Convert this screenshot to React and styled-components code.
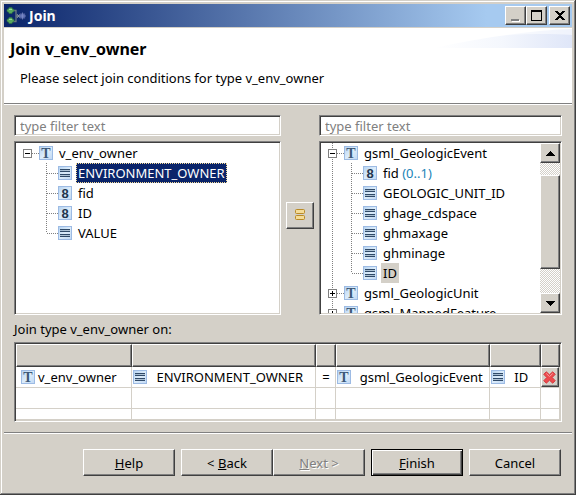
import React from "react";
import styled, { createGlobalStyle, css } from "styled-components";

const face = "#d4d0c8";
const shadow = "#808080";
const dark = "#404040";
const navy = "#0a246a";

const GlobalStyle = createGlobalStyle`
  * { box-sizing: border-box; }
  body {
    margin: 0;
    font-family: "Noto Sans", Tahoma, sans-serif;
    font-size: 13px;
    line-height: 20px;
    color: #000;
  }
  button, input, table {
    font: inherit;
    color: inherit;
  }
`;

const raised = css`
  background: ${face};
  border: 1px solid;
  border-color: #fff ${dark} ${dark} #fff;
  box-shadow: inset -1px -1px 0 ${shadow};
`;

const sunken = css`
  background: #fff;
  border: 1px solid;
  border-color: ${shadow} #fff #fff ${shadow};
  box-shadow: inset 1px 1px 0 ${dark}, inset -1px -1px 0 ${face};
`;

const dots = (direction) =>
  `repeating-linear-gradient(${direction}, ${shadow} 0 1px, transparent 1px 2px)`;

const Window = styled.main`
  display: flex;
  flex-direction: column;
  height: 100vh;
  min-height: 420px;
  padding: 4px 3px 3px 4px;
  background: ${face};
  border-right: 1px solid ${dark};
  border-bottom: 1px solid ${dark};
  box-shadow: inset 1px 1px 0 ${face}, inset -1px -1px 0 ${shadow},
    inset 2px 2px 0 #fff;
`;

const TitleBar = styled.header`
  display: flex;
  align-items: center;
  flex: none;
  height: 23px;
  padding: 0 2px;
  background: linear-gradient(90deg, ${navy}, #a6caf0 85%);
`;

const WindowTitle = styled.span`
  flex: 1;
  margin-left: 3px;
  font-size: 14px;
  font-weight: bold;
  color: #fff;
`;

const CaptionButton = styled.button`
  ${raised}
  display: grid;
  place-items: center;
  width: 21px;
  height: 19px;
  padding: 0;
  margin-left: ${(p) => (p.$apart ? 2 : 0)}px;
`;

const Banner = styled.section`
  display: grid;
  grid-template-columns: 1fr auto;
  align-items: start;
  flex: none;
  height: 76px;
  margin-top: 1px;
  background: #fff;
  border-bottom: 1px solid ${shadow};
  box-shadow: 0 1px 0 #fff;
`;

const BannerText = styled.div`
  padding: 10px 0 0 6px;
`;

const BannerTitle = styled.h1`
  margin: 0;
  font-size: 16px;
  line-height: 22px;
`;

const BannerNote = styled.p`
  margin: 8px 0 0 10px;
`;

const Content = styled.div`
  display: flex;
  flex-direction: column;
  flex: 1;
  min-height: 0;
  padding: 11px 10px 10px;
`;

const Pickers = styled.div`
  display: grid;
  grid-template-columns: 267fr 28px 243fr;
  column-gap: 5px;
  flex: 1;
  min-height: 0;
`;

const Picker = styled.section`
  display: flex;
  flex-direction: column;
  gap: 5px;
  min-width: 0;
  min-height: 0;
`;

const Filter = styled.input`
  ${sunken}
  flex: none;
  width: 100%;
  height: 21px;
  padding: 0 5px;
  border-radius: 0;
  outline: none;
  &::placeholder {
    color: ${shadow};
    opacity: 1;
  }
`;

const TreeFrame = styled.div`
  ${sunken}
  display: flex;
  flex: 1;
  min-height: 0;
  padding: 1px;
`;

const Tree = styled.ul`
  flex: 1;
  min-width: 0;
  margin: 0;
  padding: 0;
  overflow: hidden;
  list-style: none;
`;

const TreeRow = styled.li`
  display: flex;
  align-items: center;
  height: 20px;
  white-space: nowrap;
`;

const RootCell = styled.span`
  display: flex;
  align-items: center;
  flex: none;
  align-self: stretch;
  width: 23px;
  padding-left: 7px;
  background-repeat: no-repeat;
  background-image: ${(p) => (p.$line ? dots("180deg") : "none")},
    ${(p) => (p.$stub ? dots("90deg") : "none")};
  background-size: 1px 100%, 7px 1px;
  background-position: 11px 0, 16px 10px;
`;

const BranchCell = styled.span`
  flex: none;
  align-self: stretch;
  width: 19px;
  background-repeat: no-repeat;
  background-image: ${dots("180deg")}, ${dots("90deg")};
  background-size: 1px ${(p) => (p.$last ? "50%" : "100%")}, 11px 1px;
  background-position: 7px 0, 8px 10px;
`;

const Expander = styled.button`
  display: grid;
  place-items: center;
  width: 9px;
  height: 9px;
  padding: 0;
  background: #fff;
  border: 1px solid ${shadow};
`;

const NodeLabel = styled.span`
  height: 20px;
  margin-left: 4px;
  padding: 0 1px;
  line-height: 18px;
  border: 1px dotted transparent;
  ${(p) =>
    p.$state === "active" &&
    css`
      color: #fff;
      background: ${navy};
      border-color: #f5db95;
    `}
  ${(p) => p.$state === "inactive" && css`background: ${face};`}
`;

const Count = styled.span`
  color: #1a84b8;
`;

const ScrollBar = styled.div`
  display: flex;
  flex-direction: column;
  flex: none;
  width: 20px;
  background: repeating-conic-gradient(#fff 0 25%, ${face} 0 50%) 0 0 / 2px 2px;
`;

const ScrollArrow = styled.button`
  ${raised}
  display: grid;
  place-items: center;
  flex: none;
  height: 20px;
  padding: 0;
`;

const ScrollTrack = styled.div`
  display: grid;
  grid-template-rows: 12fr 95fr 24fr;
  flex: 1;
`;

const ScrollThumb = styled.div`
  ${raised}
  grid-row: 2;
`;

const LinkButton = styled.button`
  ${raised}
  display: grid;
  place-items: center;
  align-self: center;
  height: 27px;
  padding: 0;
`;

const Caption = styled.h2`
  flex: none;
  margin: 0;
  padding: 4px 0 3px;
  font-size: 13px;
  font-weight: normal;
`;

const TableFrame = styled.div`
  ${sunken}
  flex: none;
  padding: 1px;
`;

const Conditions = styled.table`
  width: 100%;
  table-layout: fixed;
  border-collapse: separate;
  border-spacing: 0;
`;

const Column = styled.col`
  width: ${(p) => p.$share}%;
`;

const HeadCell = styled.th`
  height: 23px;
  padding: 0;
  background: ${face};
  border: 1px solid;
  border-color: #fff ${dark} ${dark} #fff;
  box-shadow: inset -1px -1px 0 ${shadow};
`;

const Cell = styled.td`
  height: ${(p) => (p.$short ? 11 : 21)}px;
  padding: 0;
  border-right: 1px solid ${face};
  border-bottom: 1px solid ${face};
`;

const CellBody = styled.span`
  display: flex;
  align-items: center;
  gap: ${(p) => (p.$tight ? 3 : 9)}px;
  padding-left: ${(p) => (p.$tight ? 5 : 1)}px;
  justify-content: ${(p) => (p.$center ? "center" : "flex-start")};
  white-space: nowrap;
`;

const RemoveButton = styled.button`
  ${raised}
  display: grid;
  place-items: center;
  width: 100%;
  height: 20px;
  padding: 0;
`;

const Footer = styled.footer`
  display: flex;
  justify-content: flex-end;
  flex: none;
  gap: 6px;
  padding: 16px 11px 15px 0;
  border-top: 1px solid ${shadow};
  box-shadow: inset 0 1px 0 #fff;
`;

const Pair = styled.div`
  display: flex;
`;

const PushButton = styled.button`
  ${raised}
  width: 92px;
  height: 27px;
  padding: 0;
  ${(p) =>
    p.$primary &&
    css`
      border-color: #000;
      box-shadow: inset 1px 1px 0 #fff, inset -1px -1px 0 ${dark},
        inset -2px -2px 0 ${shadow};
    `}
  &:disabled {
    color: ${shadow};
    text-shadow: 1px 1px 0 #fff;
  }
`;

const Glyph = styled.svg`
  display: block;
  flex: none;
`;

const TileMark = styled.text`
  font-family: ${(p) => (p.$serif ? '"Liberation Serif", serif' : '"Liberation Sans", sans-serif')};
  font-size: ${(p) => (p.$serif ? 14 : 13)}px;
  font-weight: bold;
  text-anchor: middle;
  fill: ${(p) => (p.$serif ? "#3c5878" : "#22364f")};
`;

function Tile({ id, children }) {
  return (
    <Glyph width="14" height="14" viewBox="0 0 14 14" aria-hidden="true">
      <defs>
        <linearGradient id={id} x1="0" y1="0" x2="1" y2="1">
          <stop offset="0" stopColor="#b4d2f0" />
          <stop offset="0.5" stopColor="#dcecfa" />
          <stop offset="1" stopColor="#c0d8f4" />
        </linearGradient>
      </defs>
      <rect x="0.5" y="0.5" width="13" height="13" fill={`url(#${id})`} stroke="#9dbbe4" />
      {children}
    </Glyph>
  );
}

function TypeIcon() {
  return (
    <Tile id="tile-type">
      <TileMark x="7" y="12" $serif>
        T
      </TileMark>
    </Tile>
  );
}

function TextIcon() {
  return (
    <Tile id="tile-text">
      <path d="M2 3h10v1H2zM2 5h10v1H2zM2 8h10v1H2zM2 10h10v1H2z" fill="#304a68" />
      <path d="M2 4h10v1H2zM2 9h10v1H2z" fill="#304a68" opacity="0.25" />
    </Tile>
  );
}

function NumberIcon() {
  return (
    <Tile id="tile-number">
      <TileMark x="7" y="12">
        8
      </TileMark>
    </Tile>
  );
}

const icons = { type: TypeIcon, text: TextIcon, number: NumberIcon };

function JoinIcon() {
  return (
    <Glyph width="20" height="20" viewBox="0 0 20 20" aria-hidden="true">
      <path d="M6 4.500h4v11H6M10 10h4" fill="none" stroke="#6c7a80" strokeWidth="1.300" />
      <path d="M11 8l3 4M11 12l3-4" stroke="#9aa5b0" strokeWidth="0.800" />
      <path
        d="M1 3.500L2.500 3 3 1.500h3L6.500 3 8 3.500v2L6.500 6 6 7.500H3L2.500 6 1 5.500zM1 13.500L2.500 13l.5-1.500h3l.5 1.500 1.500.5v2l-1.500.5L6 17.500H3L2.500 16 1 15.500z"
        fill="#58a860"
        stroke="#2e7040"
        strokeWidth="0.600"
      />
      <path d="M3 3h3v1H3zM3 13h3v1H3z" fill="#9ad89c" />
      <path d="M14 7.500h5v5h-5z" fill="#5a6cb0" stroke="#324483" strokeWidth="0.600" />
      <path d="M13 10h7M16.500 6.500v7" stroke="#8391c8" strokeWidth="0.700" />
    </Glyph>
  );
}

function BannerArt() {
  return (
    <Glyph width="138" height="20" viewBox="0 0 138 20" aria-hidden="true">
      <defs>
        <linearGradient id="banner-wash" x1="0" x2="1">
          <stop offset="0" stopColor="#fff" />
          <stop offset="0.5" stopColor="#f4f7fd" />
          <stop offset="1" stopColor="#dfe6f8" />
        </linearGradient>
      </defs>
      <path d="M0 20C45 10 90 3 138 1v19z" fill="url(#banner-wash)" />
      <path d="M60 8C90 3 115 1 138 1v6C110 5 85 6 60 8z" fill="#fff" opacity="0.5" />
    </Glyph>
  );
}

function EqualIcon() {
  return (
    <Glyph width="12" height="12" viewBox="0 0 12 12" aria-hidden="true">
      <g fill="#f4dc98" stroke="#b98a26">
        <rect x="1.500" y="0.500" width="9" height="4" rx="1" />
        <rect x="1.500" y="6.500" width="9" height="4" rx="1" />
      </g>
    </Glyph>
  );
}

function RemoveIcon() {
  return (
    <Glyph width="13" height="13" viewBox="0 0 13 13" aria-hidden="true">
      <path
        d="M3.300.8L6.500 3.800 9.700.8 12.200 3.300 9.200 6.500 12.200 9.700 9.700 12.200 6.500 9.200 3.300 12.200.8 9.700 3.800 6.500.8 3.300z"
        fill="#ee4a4e"
        stroke="#d23a3e"
        strokeLinejoin="round"
      />
      <path d="M3.300 2.500l3.200 3 3.200-3" fill="none" stroke="#f79a9a" />
    </Glyph>
  );
}

function Arrow({ down }) {
  return (
    <Glyph width="9" height="5" viewBox="0 0 9 5" shapeRendering="crispEdges" aria-hidden="true">
      <path d={down ? "M0 0h9L4.500 5z" : "M0 5h9L4.500 0z"} />
    </Glyph>
  );
}

function Sign({ plus }) {
  return (
    <Glyph width="5" height="5" viewBox="0 0 5 5" shapeRendering="crispEdges" aria-hidden="true">
      <path d={plus ? "M0 2h5v1H0zM2 0h1v5H2z" : "M0 2h5v1H0z"} />
    </Glyph>
  );
}

const leftNodes = [
  { name: "v_env_owner", kind: "type", open: true },
  { name: "ENVIRONMENT_OWNER", kind: "text", child: true, state: "active" },
  { name: "fid", kind: "number", child: true },
  { name: "ID", kind: "number", child: true },
  { name: "VALUE", kind: "text", child: true, last: true },
];

const rightNodes = [
  { name: "gsml_GeologicEvent", kind: "type", open: true },
  { name: "fid", count: "(0..1)", kind: "number", child: true },
  { name: "GEOLOGIC_UNIT_ID", kind: "text", child: true },
  { name: "ghage_cdspace", kind: "text", child: true },
  { name: "ghmaxage", kind: "text", child: true },
  { name: "ghminage", kind: "text", child: true },
  { name: "ID", kind: "text", child: true, last: true, state: "inactive" },
  { name: "gsml_GeologicUnit", kind: "type" },
  { name: "gsml_MappedFeature", kind: "type" },
];

function TreePicker({ label, nodes, siblings }) {
  return (
    <Picker aria-label={label}>
      <Filter type="text" placeholder="type filter text" aria-label={`Filter ${label}`} />
      <TreeFrame>
        <Tree>
          {nodes.map((node) => {
            const Icon = icons[node.kind];
            return (
              <TreeRow key={node.name}>
                <RootCell $line={siblings} $stub={!node.child}>
                  {!node.child && (
                    <Expander type="button" aria-label={`Toggle ${node.name}`}>
                      <Sign plus={!node.open} />
                    </Expander>
                  )}
                </RootCell>
                {node.child && <BranchCell $last={node.last} />}
                <Icon />
                <NodeLabel $state={node.state}>
                  {node.name}
                  {node.count && <Count> {node.count}</Count>}
                </NodeLabel>
              </TreeRow>
            );
          })}
        </Tree>
        {siblings && (
          <ScrollBar>
            <ScrollArrow type="button" aria-label="Scroll up">
              <Arrow />
            </ScrollArrow>
            <ScrollTrack>
              <ScrollThumb />
            </ScrollTrack>
            <ScrollArrow type="button" aria-label="Scroll down">
              <Arrow down />
            </ScrollArrow>
          </ScrollBar>
        )}
      </TreeFrame>
    </Picker>
  );
}

const columnShares = [21.4, 33.8, 3.6, 28.4, 9.3, 3.5];

export default function App() {
  return (
    <>
      <GlobalStyle />
      <Window>
        <TitleBar>
          <JoinIcon />
          <WindowTitle>Join</WindowTitle>
          <CaptionButton type="button" aria-label="Minimize" disabled>
            <Glyph width="13" height="13" viewBox="0 0 13 13" aria-hidden="true">
              <path d="M3 11h8v2H3z" fill="#fff" />
              <path d="M2 10h8v2H2z" fill={shadow} />
            </Glyph>
          </CaptionButton>
          <CaptionButton type="button" aria-label="Maximize">
            <Glyph width="11" height="11" viewBox="0 0 11 11" aria-hidden="true">
              <path d="M0 0h11v11H0zM1 2v8h9V2z" fillRule="evenodd" />
            </Glyph>
          </CaptionButton>
          <CaptionButton type="button" aria-label="Close" $apart>
            <Glyph width="10" height="9" viewBox="0 0 10 9" shapeRendering="crispEdges" aria-hidden="true">
              <path d="M1 0l8 9M9 0L1 9" stroke="#000" strokeWidth="2" />
            </Glyph>
          </CaptionButton>
        </TitleBar>

        <Banner>
          <BannerText>
            <BannerTitle>Join v_env_owner</BannerTitle>
            <BannerNote>Please select join conditions for type v_env_owner</BannerNote>
          </BannerText>
          <BannerArt />
        </Banner>

        <Content>
          <Pickers>
            <TreePicker label="joined type" nodes={leftNodes} />
            <LinkButton type="button" aria-label="Add condition">
              <EqualIcon />
            </LinkButton>
            <TreePicker label="target type" nodes={rightNodes} siblings />
          </Pickers>

          <Caption id="conditions-label">Join type v_env_owner on:</Caption>
          <TableFrame>
            <Conditions aria-labelledby="conditions-label">
              <colgroup>
                {columnShares.map((share, i) => (
                  <Column key={i} $share={share} />
                ))}
              </colgroup>
              <thead>
                <tr>
                  {columnShares.map((share, i) => (
                    <HeadCell key={i} />
                  ))}
                </tr>
              </thead>
              <tbody>
                <tr>
                  <Cell>
                    <CellBody $tight>
                      <TypeIcon />
                      v_env_owner
                    </CellBody>
                  </Cell>
                  <Cell>
                    <CellBody>
                      <TextIcon />
                      ENVIRONMENT_OWNER
                    </CellBody>
                  </Cell>
                  <Cell>
                    <CellBody $center>=</CellBody>
                  </Cell>
                  <Cell>
                    <CellBody>
                      <TypeIcon />
                      gsml_GeologicEvent
                    </CellBody>
                  </Cell>
                  <Cell>
                    <CellBody>
                      <TextIcon />
                      ID
                    </CellBody>
                  </Cell>
                  <Cell>
                    <RemoveButton type="button" aria-label="Remove condition">
                      <RemoveIcon />
                    </RemoveButton>
                  </Cell>
                </tr>
                <tr>
                  {columnShares.map((share, i) => (
                    <Cell key={i} />
                  ))}
                </tr>
                <tr>
                  {columnShares.map((share, i) => (
                    <Cell key={i} $short />
                  ))}
                </tr>
              </tbody>
            </Conditions>
          </TableFrame>
        </Content>

        <Footer>
          <PushButton type="button">
            <u>H</u>elp
          </PushButton>
          <Pair>
            <PushButton type="button">
              &lt; <u>B</u>ack
            </PushButton>
            <PushButton type="button" disabled>
              <u>N</u>ext &gt;
            </PushButton>
          </Pair>
          <PushButton type="button" $primary>
            <u>F</u>inish
          </PushButton>
          <PushButton type="button">Cancel</PushButton>
        </Footer>
      </Window>
    </>
  );
}
